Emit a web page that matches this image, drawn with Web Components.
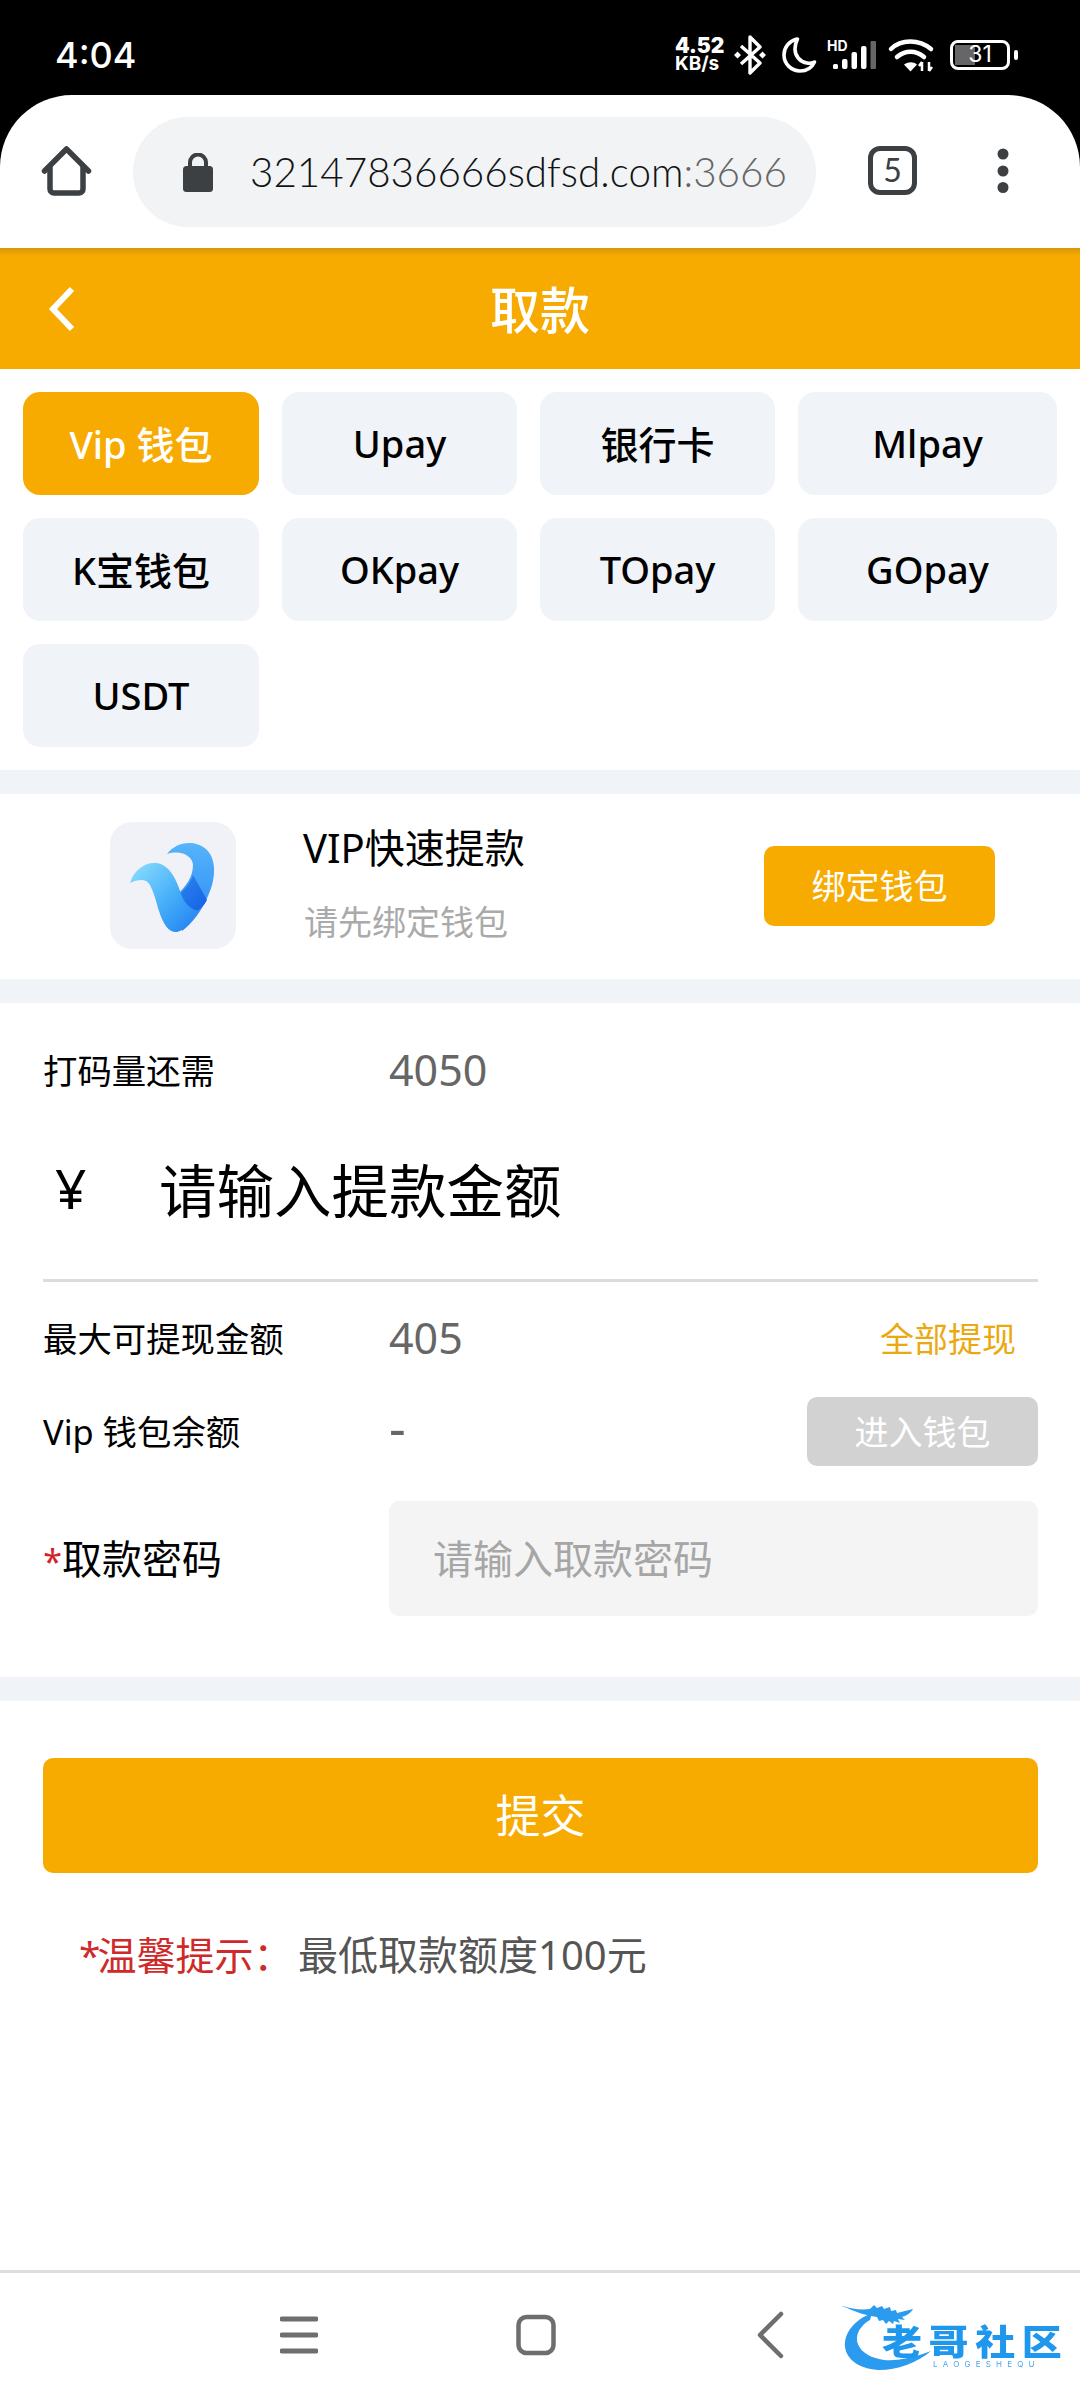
<!DOCTYPE html>
<html lang="zh"><head><meta charset="utf-8"><title>取款</title>
<style>
html,body{margin:0;padding:0;background:#000}
body{font-family:"Noto Sans","Noto Sans CJK SC",sans-serif;width:1080px;height:2400px;display:flex;flex-direction:column;overflow:hidden}
app-main{flex:1}
</style></head><body>
<status-bar></status-bar>
<browser-bar></browser-bar>
<app-main>
  <page-header>取款</page-header>
  <pay-tabs>
    <pay-tab active>Vip 钱包</pay-tab><pay-tab>Upay</pay-tab><pay-tab>银行卡</pay-tab><pay-tab>Mlpay</pay-tab>
    <pay-tab>K宝钱包</pay-tab><pay-tab>OKpay</pay-tab><pay-tab>TOpay</pay-tab><pay-tab>GOpay</pay-tab>
    <pay-tab>USDT</pay-tab>
  </pay-tabs>
  <wallet-card></wallet-card>
  <withdraw-form></withdraw-form>
  <submit-area></submit-area>
</app-main>
<nav-bar></nav-bar>
<script>
const F='"Noto Sans","Noto Sans CJK SC",sans-serif';
function def(name,html){
  customElements.define(name,class extends HTMLElement{
    constructor(){super();this.attachShadow({mode:'open'}).innerHTML=html;}
  });
}
def('status-bar',`<style>
:host{display:flex;align-items:center;height:95px;background:#000;color:#fff;font-family:Inter,${F};flex:none;box-sizing:border-box;padding:14px 62px 0 55px}
.t{font-size:36px;font-weight:500;margin-right:auto}
.r{display:flex;align-items:center;height:50px}
.sp{font-size:19px;font-weight:700;line-height:18px;width:50px;margin-right:7px;letter-spacing:0}
.sp b{display:block;font-size:21px}
svg{display:block;flex:none}
.bat{box-sizing:border-box;width:60px;height:30px;border:3px solid #fff;border-radius:8px;position:relative;margin-left:14px;font-size:23px;line-height:23px;text-align:center;overflow:hidden;font-weight:400}
.bat i{position:absolute;left:2px;top:2px;bottom:2px;width:20px;background:#666}
.bat span{position:relative}
.nub{width:4px;height:10px;background:#fff;border-radius:2px;margin-left:4px}
</style><div class="t">4:04</div>
<div class="r"><div class="sp"><b>4.52</b>KB/s</div>
<svg width="36" height="40" viewBox="0 0 36 40"><path d="M9 11l19 17-10 10V2l10 10L9 29" fill="none" stroke="#fff" stroke-width="3.4" stroke-linejoin="round"/><path d="M2 20l3.5-3.5L9 20l-3.5 3.5zM27 20l3.5-3.5L34 20l-3.5 3.500z" fill="#fff"/></svg>
<svg style="margin-left:13px" width="36" height="38" viewBox="0 0 36 38"><path d="M16 3C8 5 3 11.500 3 19c0 9 7.500 16 16 16 6.500 0 12-3.500 14.500-9-2 1-5 1.500-7.500 1-7-1-12-7-12-14 0-3.500 1-7 2.500-10z" fill="none" stroke="#fff" stroke-width="3.600" stroke-linejoin="round"/></svg>
<svg style="margin-left:9px" width="52" height="36" viewBox="0 0 52 36"><text x="1" y="14" font-size="14" font-weight="700" fill="#fff" font-family="Inter,sans-serif">HD</text><rect x="7" y="27" width="5" height="5" rx="1.500" fill="#fff"/><rect x="16" y="22" width="5.500" height="10" rx="2" fill="#fff"/><rect x="25.500" y="15" width="5.500" height="17" rx="2" fill="#fff"/><rect x="35" y="9" width="5.500" height="23" rx="2" fill="#fff"/><rect x="44.500" y="4" width="5.500" height="28" rx="1" fill="#666"/></svg>
<svg style="margin-left:8px" width="50" height="36" viewBox="0 0 50 36"><path d="M5 12C15 2 33 2 45 12" fill="none" stroke="#fff" stroke-width="4.500" stroke-linecap="round"/><path d="M11 20c8-7 19-7 27 0" fill="none" stroke="#fff" stroke-width="4.500" stroke-linecap="round"/><path d="M18 27.500c5-3 9-3 13 0l-6.500 7z" fill="#fff"/><path d="M36 25v9M33 29l3-4M43 34v-9M43 34l3-4" stroke="#fff" stroke-width="2.500" fill="none"/></svg>
<div class="bat"><i></i><span>31</span></div><div class="nub"></div></div>`);
def('browser-bar',`<style>
:host{display:block;flex:none;height:153px;background:#fff;border-radius:72px 72px 0 0;box-sizing:border-box;padding:22px 0 0 0;color:#3c4043;font-family:Lato,${F}}
.row{display:flex;align-items:flex-start}
.home{margin:29px 0 0 41px}
.pill{width:683px;height:110px;border-radius:55px;background:#f1f3f4;margin-left:41px;display:flex;align-items:center;box-sizing:border-box;padding-left:50px;overflow:hidden;white-space:nowrap}
.url{font-size:40.400px;margin-left:37px;font-weight:300;color:#111315;font-family:Lato,sans-serif;margin-bottom:2px}
.url span{color:#666}
.tabs{width:49px;height:49px;box-sizing:border-box;margin:29px 0 0 52px;border:5px solid #3c4043;border-radius:12px;text-align:center;font-size:32px;line-height:38px;font-family:Lato,sans-serif}
.dots{margin:31px 0 0 80px}
svg{display:block;flex:none}
</style><div class="row">
<svg class="home" width="51" height="50" viewBox="0 0 51 50"><path d="M3.500 25L25.500 3l22 22" fill="none" stroke="#3c4043" stroke-width="5.500" stroke-linecap="round" stroke-linejoin="round"/><path d="M9 20v23a4 4 0 0 0 4 4h25a4 4 0 0 0 4-4V20" fill="none" stroke="#3c4043" stroke-width="5.500"/></svg>
<div class="pill"><svg width="30" height="39" viewBox="0 0 30 39"><path d="M7 15V9.500a8 8 0 0 1 16 0V15" fill="none" stroke="#3c4043" stroke-width="4"/><rect x="0" y="13" width="30" height="26" rx="3.500" fill="#3c4043"/></svg>
<div class="url">32147836666sdfsd.com<span>:3666</span></div></div>
<div class="tabs">5</div>
<svg class="dots" width="12" height="46" viewBox="0 0 12 46"><circle cx="6" cy="6" r="5.500" fill="#3c4043"/><circle cx="6" cy="23" r="5.500" fill="#3c4043"/><circle cx="6" cy="39.500" r="5.500" fill="#3c4043"/></svg>
</div>`);
def('app-main',`<style>:host{display:block;background:#fff;min-height:0}</style><slot></slot>`);
def('page-header',`<style>
:host{display:flex;align-items:center;justify-content:center;box-sizing:border-box;height:121px;padding-bottom:4px;background:linear-gradient(#d89608 0,#f7ab00 8px);color:#fff;font-size:50px;font-weight:500;position:relative;font-family:"Noto Sans CJK SC",sans-serif}
svg{position:absolute;left:47px;top:38px}
</style><svg width="30" height="46" viewBox="0 0 30 46"><path d="M25 3L6 23l19 20" fill="none" stroke="#fff" stroke-width="6"/></svg><slot></slot>`);
def('pay-tabs',`<style>
:host{display:grid;grid-template-columns:236px 235px 235px 259px;gap:23px;padding:23px 0 23px 23px;background:#fff;border-bottom:24px solid #f0f4f8}
</style><slot></slot>`);
def('pay-tab',`<style>
:host{display:flex;align-items:center;justify-content:center;box-sizing:border-box;height:103px;padding-bottom:2px;border-radius:17px;background:#f0f4f8;color:#000;font-size:38px;font-weight:500;font-family:${F}}
:host([active]){background:#f7ab00;color:#fff}
</style><slot></slot>`);
def('wallet-card',`<style>
:host{display:flex;align-items:center;height:185px;background:#fff;border-bottom:24px solid #f0f4f8;font-family:${F}}
svg{display:block;flex:none;margin:-3px 0 0 110px}
.m{margin-left:67px;flex:1;padding-bottom:8px}
.a{font-size:40px;color:#000;line-height:54px}
.b{font-size:34px;color:#aaa;line-height:46px;margin-top:24px;margin-left:1px}
.btn{box-sizing:border-box;width:231px;height:80px;padding-bottom:3px;border-radius:10px;background:#f7ab00;color:#fff;font-size:34px;display:flex;align-items:center;justify-content:center;margin:-2px 85px 0 0}
</style>
<svg width="126" height="127" viewBox="0 0 126 127"><defs>
<linearGradient id="g1" x1="0" y1="0" x2="1" y2="1"><stop offset="0" stop-color="#8fe0ff"/><stop offset=".55" stop-color="#45aef8"/><stop offset="1" stop-color="#1e7df0"/></linearGradient>
<linearGradient id="g2" x1="0" y1="0" x2="0" y2="1"><stop offset="0" stop-color="#55b4fb"/><stop offset="1" stop-color="#2a86f2"/></linearGradient>
<linearGradient id="g3" x1="0" y1="0" x2="1" y2="1"><stop offset="0" stop-color="#2b85f0"/><stop offset="1" stop-color="#1560e4"/></linearGradient></defs>
<rect width="126" height="127" rx="22" fill="#f1f1f8"/>
<path d="M57 32C66 20 84 17 96 27c11 10 10 30 2 47-6 14-16 28-26 35l-5-36c9-9 16-18 16-30 0-8-11-16-26-11z" fill="url(#g2)"/>
<path d="M70 72C76 66 81 60 83 53l14 25c-2 4-6 9-10 11-8-2-14-9-17-17z" fill="url(#g3)"/>
<path d="M20 61C24 47 36 40 46 41c12 1 20 14 25 31 3 9 9 15 17 17-6 9-13 19-21 21-8 1-14-8-18-21-3-10-7-27-13-30-4-2-10-1-16 2z" fill="url(#g1)"/>
</svg>
<div class="m"><div class="a">VIP快速提款</div><div class="b">请先绑定钱包</div></div><div class="btn">绑定钱包</div>`);
def('withdraw-form',`<style>
:host{display:block;background:#fff;border-bottom:24px solid #f0f4f8;padding:0 42px 61px 43px;font-family:${F};color:#000}
.row{display:flex;align-items:center}
.l{width:346px;font-size:34.400px;flex:none}
.v{font-size:43px;color:#666;flex:1}
.r1{height:137px;padding-bottom:5px;box-sizing:border-box}
.amt{display:flex;align-items:center;font-size:57.500px;height:95px;border-bottom:3px solid #dcdcdc;padding-bottom:44px}
.amt span{width:116px;padding-left:12px;box-sizing:border-box;font-size:55px}
.r2{height:112px;box-sizing:border-box;padding-bottom:2px}
.all{color:#eba911;font-size:34px;margin-right:22px}
.r3{height:69px;margin-top:3px;box-sizing:border-box;padding-bottom:3px}
.r3 .v{font-size:52px;line-height:52px;padding-bottom:6px}
.go{box-sizing:border-box;width:231px;height:69px;padding-bottom:3px;margin-bottom:-3px;background:#d2d2d2;color:#fff;border-radius:10px;font-size:34px;display:flex;align-items:center;justify-content:center}
.r4{margin-top:35px}
.r4 .l{font-size:40px;padding-bottom:3px}
.st{color:#d2232a;font-size:34px;display:inline-block;width:19px;text-align:center}
.inp{flex:1;height:112px;padding:0 0 3px 44px;border-radius:10px;background:#f4f4f4;color:#a6a6a6;font-size:40px;display:flex;align-items:center}
</style>
<div class="row r1"><div class="l">打码量还需</div><div class="v">4050</div></div>
<div class="amt"><span>¥</span>请输入提款金额</div>
<div class="row r2"><div class="l">最大可提现金额</div><div class="v">405</div><div class="all">全部提现</div></div>
<div class="row r3"><div class="l">Vip 钱包余额</div><div class="v">-</div><div class="go">进入钱包</div></div>
<div class="row r4"><div class="l"><span class="st">*</span>取款密码</div><div class="inp">请输入取款密码</div></div>`);
def('submit-area',`<style>
:host{display:block;background:#fff;padding:57px 42px 0 43px;font-family:${F}}
.b{box-sizing:border-box;height:115px;padding-bottom:5px;border-radius:10px;background:#f7ab00;color:#fff;font-size:45px;display:flex;align-items:center;justify-content:center}
.tip{margin:55px 0 0 36px;font-size:40px;line-height:54px;color:#555;display:flex;align-items:center}
.tip b{font-weight:400;color:#cf2a2a;font-size:39px;flex:none;width:219px;white-space:nowrap}
.tip i{font-style:normal;margin-right:-3px}
</style><div class="b">提交</div><div class="tip"><b><i>*</i>温馨提示：</b><span>最低取款额度100元</span></div>`);
def('nav-bar',`<style>
:host{display:block;flex:none;height:130px;background:#fff;border-top:3px solid #dedede;position:relative;box-sizing:border-box}
.in{display:flex;align-items:center;height:124px;padding-left:280px}
svg{display:block;flex:none}
.logo{position:absolute;left:842px;top:30px;width:225px;height:75px;font-family:"Noto Sans CJK SC",sans-serif;filter:blur(.5px)}
.logo svg{position:absolute;left:0;top:0}
.cn{position:absolute;left:40px;top:19px;font-size:40px;font-weight:900;line-height:36px;letter-spacing:6.600px;white-space:nowrap;transform:scaleY(.88);color:#1f97ec}
.en{position:absolute;left:91px;top:56px;font-size:8px;line-height:10px;letter-spacing:5.200px;color:#4aa6ea;font-family:Inter,sans-serif;white-space:nowrap}
</style><div class="in">
<svg width="38" height="40" viewBox="0 0 38 40"><path d="M2 4h34M2 20h34M2 36h34" stroke="#6e6e6e" stroke-width="5" stroke-linecap="round"/></svg>
<svg style="margin-left:198px" width="40" height="42" viewBox="0 0 40 42"><rect x="2.500" y="3" width="35" height="36" rx="8" fill="none" stroke="#6e6e6e" stroke-width="4.500"/></svg>
<svg style="margin-left:199px" width="30" height="48" viewBox="0 0 30 48"><path d="M26 3L5 24l21 21" fill="none" stroke="#6e6e6e" stroke-width="4.500" stroke-linecap="round" stroke-linejoin="round"/></svg>
</div>
<div class="logo"><svg width="225" height="75" viewBox="0 0 225 75"><path d="M30 10C12 17 2 30 3 44c2 14 16 22 34 23 18 0 38-7 52-19-16 6-38 12-52 8-14-3-23-12-22-22 1-7 6-13 13-17z" fill="#2a9bee"/><path d="M1 3c8 3 18 4 27 3l4-4 3 3 5-2 2 3 6-2 1 4 5-1 1 3 8-2 8-2c-2 4-7 7-11 8l3 3-7-1 2 4-6-2-1 3-4-3-3 3-3-4-4 1-2-4-6-1c-6-1-15-4-29-10z" fill="#2a9bee"/></svg>
<div class="cn">老哥社区</div><div class="en">LAOGESHEQU</div></div>`);
</script>
</body></html>
